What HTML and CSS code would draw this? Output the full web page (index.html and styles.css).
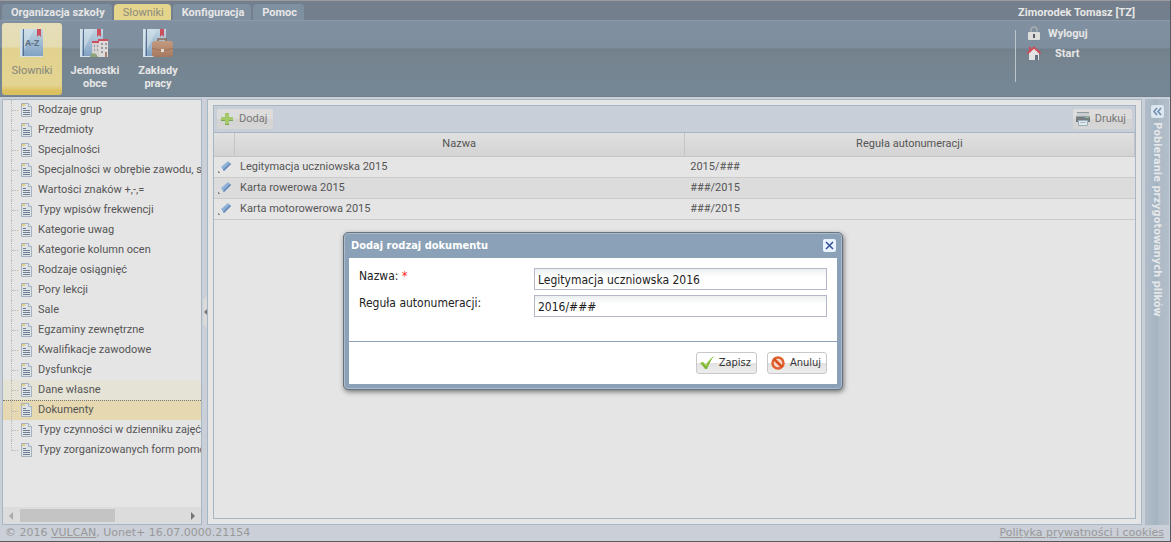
FILE: index.html
```html
<!DOCTYPE html>
<html lang="pl">
<head>
<meta charset="utf-8">
<title>Uonet+ Słowniki</title>
<link rel="stylesheet" href="styles.css">
</head>
<body>
<svg class="defs" aria-hidden="true">
  <defs>
    <linearGradient id="bookFill" x1="0" y1="0" x2="0" y2="1"><stop offset="0" stop-color="#c3d7e3"/><stop offset="1" stop-color="#7f9fc2"/></linearGradient>
    <linearGradient id="eraser" x1="0" y1="0" x2="1" y2="1"><stop offset="0" stop-color="#a5c6e2"/><stop offset="1" stop-color="#6e97c8"/></linearGradient>
    <linearGradient id="caseFill" x1="0" y1="0" x2="0" y2="1"><stop offset="0" stop-color="#c49a80"/><stop offset="1" stop-color="#a5795f"/></linearGradient>
    <symbol id="page" viewBox="0 0 11 14">
      <path d="M.5.5h7l3 3v10H.5z" fill="#dfe2e6" stroke="#a6b1bf"/>
      <path d="M7.500 .5v3h3" fill="#e8eaed" stroke="#a6b1bf"/>
      <path d="M1 1h3v2H1z" fill="#e3cf82"/>
      <path d="M2 5.500h3M2 7.500h7M2 9.500h7M2 11.500h7" stroke="#6f7f93"/>
    </symbol>
    <symbol id="edit" viewBox="0 0 14 14">
      <path d="M3 7l7-6 3 3-7 7z" fill="url(#eraser)"/>
      <path d="M6 11l7-7-1-1-7 7z" fill="#6685b8"/>
      <path d="M0 12h2v1H0zM0 11h1v1H0z" fill="#8a8a8a"/>
    </symbol>
    <symbol id="book" viewBox="0 0 26 30">
      <path d="M1 1h23v28H1z" fill="url(#bookFill)"/>
      <path d="M1 1h2v28H1zM1 28h23v1H1z" fill="#d5e1e8"/>
      <path d="M4 1h1v27H4z" fill="#58718f"/>
      <path d="M5 1h10L5 22z" fill="#d5e4eb" opacity=".55"/>
      <path d="M18 1h4v8l-2-2-2 2z" fill="#c9505c"/>
    </symbol>
  </defs>
</svg>
<header class="top">
  <div class="tabbar">
    <nav class="tabs">
      <a class="tab" href="#">Organizacja szkoły</a>
      <a class="tab tab-on" href="#">Słowniki</a>
      <a class="tab" href="#">Konfiguracja</a>
      <a class="tab" href="#">Pomoc</a>
    </nav>
    <span class="user">Zimorodek Tomasz [TZ]</span>
  </div>
  <div class="ribbon">
    <div class="tools">
      <button class="tool tool-on" type="button">
        <svg class="tool-icon" viewBox="0 0 32 30"><use href="#book" x="3" width="26" height="30"/><text class="az" x="9" y="18">A-Z</text></svg>
        <span>Słowniki</span>
      </button>
      <button class="tool" type="button">
        <svg class="tool-icon" viewBox="0 0 32 30"><use href="#book" width="26" height="30"/>
          <path d="M13 15h7v14h-7z" fill="#d5d1d1"/><path d="M20 12h9v17h-9z" fill="#dedada"/>
          <path d="M13 13h7v2h-7zM19 11h10v2H19z" fill="#c9505c"/>
          <path d="M22 15h2v2h-2zM26 15h2v2h-2zM22 19h2v2h-2zM26 19h2v2h-2zM15 17h1v2h-1zM18 17h1v2h-1zM15 21h1v2h-1zM18 21h1v2h-1zM22 23h2v2h-2z" fill="#999aa4"/>
          <path d="M26 24h2v5h-2z" fill="#aa8172"/><path d="M11 29c0-3 3-5 6-3l2 3z" fill="#8da476"/></svg>
        <span>Jednostki obce</span>
      </button>
      <button class="tool" type="button">
        <svg class="tool-icon" viewBox="0 0 32 30"><use href="#book" width="26" height="30"/>
          <path d="M16 14v-3h8v3" fill="none" stroke="#8b695a" stroke-width="1.500"/>
          <rect x="10" y="13" width="21" height="16" rx="3" fill="url(#caseFill)"/>
          <path d="M10 20c6 3 15 3 21 0" fill="none" stroke="#997058"/><path d="M19 21h3v3h-3z" fill="#e0dcd2"/></svg>
        <span>Zakłady pracy</span>
      </button>
    </div>
    <nav class="session">
      <a class="session-link" href="#">
        <svg class="session-icon" viewBox="0 0 14 14"><path d="M4 6V4a3 3 0 0 1 6 0v2" fill="none" stroke="#a7acb2" stroke-width="1.500"/><rect x="1" y="6" width="12" height="8" rx="1" fill="#dddddc"/><path d="M6 8h2v4H6z" fill="#555c64"/></svg>
        <span>Wyloguj</span></a>
      <a class="session-link session-start" href="#">
        <svg class="session-icon" viewBox="0 0 14 14"><path d="M2 7l5-5 5 5v7H2z" fill="#e3e3e3"/><path d="M.5 7.500L7 1.500l6.500 6" fill="none" stroke="#cf4c56" stroke-width="1.800"/><path d="M2 1h2v3L2 5z" fill="#cf4c56"/><path d="M8 9h3v5H8z" fill="#65717f"/></svg>
        <span>Start</span></a>
    </nav>
  </div>
</header>

<div class="workspace">
  <aside class="side">
    <ul class="tree">
      <li><a class="node" href="#"><svg class="leaf"><use href="#page"/></svg>Rodzaje grup</a></li>
      <li><a class="node" href="#"><svg class="leaf"><use href="#page"/></svg>Przedmioty</a></li>
      <li><a class="node" href="#"><svg class="leaf"><use href="#page"/></svg>Specjalności</a></li>
      <li><a class="node" href="#"><svg class="leaf"><use href="#page"/></svg>Specjalności w obrębie zawodu, sp</a></li>
      <li><a class="node" href="#"><svg class="leaf"><use href="#page"/></svg>Wartości znaków +,-,=</a></li>
      <li><a class="node" href="#"><svg class="leaf"><use href="#page"/></svg>Typy wpisów frekwencji</a></li>
      <li><a class="node" href="#"><svg class="leaf"><use href="#page"/></svg>Kategorie uwag</a></li>
      <li><a class="node" href="#"><svg class="leaf"><use href="#page"/></svg>Kategorie kolumn ocen</a></li>
      <li><a class="node" href="#"><svg class="leaf"><use href="#page"/></svg>Rodzaje osiągnięć</a></li>
      <li><a class="node" href="#"><svg class="leaf"><use href="#page"/></svg>Pory lekcji</a></li>
      <li><a class="node" href="#"><svg class="leaf"><use href="#page"/></svg>Sale</a></li>
      <li><a class="node" href="#"><svg class="leaf"><use href="#page"/></svg>Egzaminy zewnętrzne</a></li>
      <li><a class="node" href="#"><svg class="leaf"><use href="#page"/></svg>Kwalifikacje zawodowe</a></li>
      <li><a class="node" href="#"><svg class="leaf"><use href="#page"/></svg>Dysfunkcje</a></li>
      <li><a class="node node-over" href="#"><svg class="leaf"><use href="#page"/></svg>Dane własne</a></li>
      <li><a class="node node-on" href="#"><svg class="leaf"><use href="#page"/></svg>Dokumenty</a></li>
      <li><a class="node" href="#"><svg class="leaf"><use href="#page"/></svg>Typy czynności w dzienniku zajęć i</a></li>
      <li><a class="node node-last" href="#"><svg class="leaf"><use href="#page"/></svg>Typy zorganizowanych form pomo</a></li>
    </ul>
    <div class="scroll">
      <svg class="arrow" viewBox="0 0 4 8"><path d="M4 0v8L0 4z" fill="#a9a9a9"/></svg>
      <div class="track"><div class="thumb"></div></div>
      <svg class="arrow" viewBox="0 0 4 8"><path d="M0 0v8l4-4z" fill="#747474"/></svg>
    </div>
  </aside>
  <div class="splitter"><svg class="grip" viewBox="0 0 4 32"><path d="M4 0v32L0 28V4z" fill="#dadada"/><path d="M4 13v6l-3-3z" fill="#777"/></svg></div>
  <main class="content">
    <section class="panel">
      <div class="toolbar">
        <button class="action" type="button"><svg class="ico" viewBox="0 0 14 14"><path d="M5 1h4v4h4v4H9v4H5V9H1V5h4z" fill="#a5c868"/><path d="M5 12h4v1H5zM9 8h4v1H9zM1 8h4v1H1z" fill="#7da35a"/></svg>Dodaj</button>
        <button class="action" type="button"><svg class="ico" viewBox="0 0 14 14"><path d="M1 0h12v1H1z" fill="#949a9e"/><path d="M1 1h12v3H1z" fill="#c9ced1"/><path d="M0 4h14v6H0z" fill="#767d82"/><path d="M0 4h14v1H0z" fill="#999fa3"/><path d="M9 5h2v1H9z" fill="#6fc4d4"/><path d="M11 5h2v1h-2z" fill="#a2c95b"/><path d="M2.500 8.500h9v5h-9z" fill="#e2e9ed" stroke="#9cafbd"/><path d="M4 10.500h6" stroke="#a9bdca"/></svg>Drukuj</button>
      </div>
      <table class="grid">
        <colgroup><col class="col-edit"><col><col></colgroup>
        <thead><tr><th scope="col" aria-label="Edycja"></th><th scope="col">Nazwa</th><th scope="col">Reguła autonumeracji</th></tr></thead>
        <tbody>
          <tr><td><button class="edit" type="button" aria-label="Edytuj"><svg class="edit-icon"><use href="#edit"/></svg></button></td><td>Legitymacja uczniowska 2015</td><td>2015/###</td></tr>
          <tr><td><button class="edit" type="button" aria-label="Edytuj"><svg class="edit-icon"><use href="#edit"/></svg></button></td><td>Karta rowerowa 2015</td><td>###/2015</td></tr>
          <tr><td><button class="edit" type="button" aria-label="Edytuj"><svg class="edit-icon"><use href="#edit"/></svg></button></td><td>Karta motorowerowa 2015</td><td>###/2015</td></tr>
        </tbody>
      </table>
    </section>
  </main>
  <aside class="dock">
    <button class="expand" type="button" aria-label="Rozwiń"><svg class="expand-icon" viewBox="0 0 13 13"><path d="M6 3L3 6.500 6 10M10 3L7 6.500 10 10" fill="none" stroke="#6b8cae" stroke-width="1.500"/></svg></button>
    <span class="dock-title">Pobieranie przygotowanych plików</span>
  </aside>
</div>

<footer class="foot">
  <span>© 2016 <a href="#">VULCAN</a>, Uonet+ 16.07.0000.21154</span>
  <a href="#">Polityka prywatności i cookies</a>
</footer>

<form class="window" role="dialog" aria-labelledby="window-title">
  <div class="window-head">
    <h1 class="window-title" id="window-title">Dodaj rodzaj dokumentu</h1>
    <button class="close" type="button" aria-label="Zamknij"><svg class="close-icon" viewBox="0 0 13 13"><path d="M3 3l7 7M10 3l-7 7" stroke="#35509a" stroke-width="1.500"/></svg></button>
  </div>
  <div class="window-body">
    <div class="fields">
      <div class="field"><label for="name">Nazwa: <span class="req">*</span></label><input id="name" type="text" value="Legitymacja uczniowska 2016"></div>
      <div class="field"><label for="rule">Reguła autonumeracji:</label><input id="rule" type="text" value="2016/###"></div>
    </div>
    <div class="buttons">
      <button class="btn" type="submit"><svg class="ico" viewBox="0 0 14 14"><path d="M0 7l3-1 3 3c2-4 4-6 8-9-3 4-5 8-7 13H5C4 11 2 9 0 7z" fill="#7fb530"/><path d="M1 7l2-.5 3 3.500c2-4 4-6 6-8" fill="none" stroke="#a5d35c"/></svg>Zapisz</button>
      <button class="btn" type="button"><svg class="ico" viewBox="0 0 14 14"><circle cx="7" cy="7" r="5.500" fill="#f5d9cc" stroke="#e0602e" stroke-width="2.500"/><path d="M3 3l8 8" stroke="#d9501f" stroke-width="2.500"/></svg>Anuluj</button>
    </div>
  </div>
</form>
</body>
</html>
```
FILE: styles.css
```css
* { box-sizing: border-box; }
body {
  margin: 0;
  min-height: 100vh;
  display: flex;
  flex-direction: column;
  background: #cacfd8;
  border-top: 1px solid #9b9b9b;
  border-right: 1px solid #565a5f;
  border-bottom: 1px solid #565a5f;
  font: 11px/14px Roboto, sans-serif;
  color: #555;
}
a { color: inherit; text-decoration: none; }
button, input { font: inherit; color: inherit; margin: 0; }
.defs { position: absolute; width: 0; height: 0; }

.top { color: #e6e6e6; font: bold 11px/13px Roboto, sans-serif; border-bottom: 1px solid #6f8090; }
.tabbar { display: flex; justify-content: space-between; align-items: flex-end; height: 20px; padding: 0 35px 0 2px; background: #737f8c; border-bottom: 1px solid #8c9cae; }
.tabs { display: flex; gap: 2px; }
.tab { padding: 2px 7px 1px 9px; background: #7f90a1; border-radius: 4px 4px 0 0; }
.tab-on { background: #e5d48b; color: #8b8b80; font-weight: normal; }
.user { padding-bottom: 1px; }
.ribbon { display: flex; justify-content: space-between; padding: 2px 0 1px 2px; height: 75px; background: linear-gradient(#8090a1 0, #7e8e9e 27px, #72808c 28px, #75848f 50%, #758796 100%); }
.tools { display: flex; gap: 3px; }
.tool { display: flex; flex-direction: column; align-items: center; gap: 6px; width: 60px; padding: 5px; border: 0; border-radius: 3px; background: none; line-height: 13px; }
.tool-on { background: linear-gradient(#e5deb8 0, #e5dcb2 24px, #e2d28f 25px, #e4d492 62px, #dcc05f 68px); color: #85857b; font-weight: normal; }
.tool-icon { width: 32px; height: 30px; flex: none; }
.az { font: bold 9px "Noto Sans", sans-serif; fill: #5f7487; }
.session { display: flex; flex-direction: column; gap: 6px; align-self: flex-start; width: 155px; height: 52px; margin-top: 7px; padding-left: 11px; border-left: 1px solid #bdc5cc; }
.session-link { display: flex; align-items: center; gap: 7px; height: 14px; margin-top: -4px; margin-bottom: 4px; }
.session-start { gap: 14px; }
.session-icon { width: 14px; height: 14px; }

.workspace { flex: 1; display: flex; min-height: 0; padding: 2px 1px 0 2px; }
.side { display: flex; flex-direction: column; width: 200px; border: 1px solid #a6b6c4; background: #e5e5e5; overflow: hidden; }
.tree { flex: 1; list-style: none; margin: 0; padding: 0; }
.node { position: relative; display: flex; align-items: center; gap: 6px; height: 20px; padding-left: 18px; white-space: nowrap; }
.node::before { content: ""; position: absolute; left: 8px; top: 0; height: 20px; border-left: 1px dotted #b9b9b9; }
.node::after { content: ""; position: absolute; left: 9px; top: 10px; width: 6px; border-top: 1px dotted #b9b9b9; }
.node-last::before { height: 10px; }
.leaf { width: 11px; height: 14px; flex: none; }
.node-over { background: #e5e3d6; }
.node-on { background: #e6d9b2; border-top: 1px dotted #777; padding-bottom: 1px; }
.scroll { display: flex; align-items: center; gap: 7px; height: 17px; padding: 0 6px; background: #dcdcdc; }
.arrow { width: 4px; height: 8px; }
.track { flex: 1; }
.thumb { width: 58%; height: 13px; background: #c4c4c4; }
.splitter { display: flex; align-items: center; width: 5px; padding-left: 1px; }
.grip { width: 4px; height: 32px; }

.content { flex: 1; display: flex; min-width: 0; padding: 5px; border: 1px solid #a6b6c4; background: #e5e5e5; }
.panel { flex: 1; border: 1px solid #a6b6c4; }
.toolbar { display: flex; justify-content: space-between; align-items: center; height: 27px; padding: 0 3px; background: #c9cfd8; border-bottom: 1px solid #a6b6c4; }
.action { display: flex; align-items: center; gap: 5px; height: 20px; padding: 0 6px 0 3px; border: 0; border-radius: 2px; background: linear-gradient(#dcdcdc 50%, #d3d3d3 50%, #d6d6d6); color: #777; }
.ico { width: 14px; height: 14px; flex: none; }
.grid { width: 100%; table-layout: fixed; border-collapse: collapse; }
.col-edit { width: 20px; }
.grid th { height: 23px; padding: 0; font-weight: normal; background: linear-gradient(#e0e0e0, #d3d3d3); border-bottom: 1px solid #c4c4c4; border-right: 1px solid #c4c4c4; }
.grid td { height: 21px; padding: 0 6px; border-bottom: 1px solid #cbcbcb; }
.grid td:first-child { padding: 0 4px; }
.grid tbody tr:nth-child(even) { background: #dcdcdc; }
.edit { display: block; padding: 0; border: 0; background: none; }
.edit-icon { display: block; width: 14px; height: 14px; }

.dock { display: flex; flex-direction: column; align-items: center; gap: 4px; width: 24px; margin-left: 3px; padding-top: 6px; background: linear-gradient(90deg, #b1bcc9, #a4b4c1 13px, #adbac6 13px, #b2bfcb); }
.expand { width: 13px; height: 13px; padding: 0; border: 0; border-radius: 2px; background: #dce6ee; }
.expand-icon, .close-icon { display: block; width: 13px; height: 13px; }
.dock-title { writing-mode: vertical-rl; font: bold 11px/13px "DejaVu Sans Condensed", sans-serif; color: #e5e7e9; white-space: nowrap; }

.foot { display: flex; justify-content: space-between; height: 16px; padding: 0 6px 0 5px; font: 11px/15px "DejaVu Sans", sans-serif; color: #999; }
.foot a { text-decoration: underline; }

.window { position: absolute; left: 343px; top: 232px; width: 500px; padding: 0 5px 5px; background: #8ba1b7; border: 1px solid #69737e; border-radius: 5px; box-shadow: inset 0 0 0 1px #a9bbcc, 1px 2px 5px #777; color: #222; }
.window-head { display: flex; justify-content: space-between; align-items: center; height: 25px; padding: 0 1px 0 2px; }
.window-title { margin: 0; font: bold 11px/14px "DejaVu Sans Condensed", sans-serif; color: #fff; }
.close { width: 13px; height: 13px; padding: 0; border: 0; border-radius: 2px; background: #eaf3ff; }
.window-body { background: #fff; font: 12px/16px "DejaVu Sans Condensed", sans-serif; }
.fields { display: flex; flex-direction: column; gap: 5px; padding: 10px 10px 24px; }
.field { display: flex; }
.field label { width: 175px; }
.field input { flex: 1; height: 22px; padding: 1px 3px 0; border: 1px solid #b5b8c8; background: linear-gradient(#eceff0, #fff 8px); }
.req { color: #f22; }
.buttons { display: flex; justify-content: flex-end; gap: 10px; padding: 10px; border-top: 1px solid #8ba1b7; }
.btn { display: flex; align-items: center; gap: 5px; height: 22px; padding: 0 5px 0 3px; border: 1px solid #c8c8c8; border-radius: 3px; background: linear-gradient(#fff 50%, #e2e2e2 50%, #ededed); font-size: 11px; color: #333; }
```
